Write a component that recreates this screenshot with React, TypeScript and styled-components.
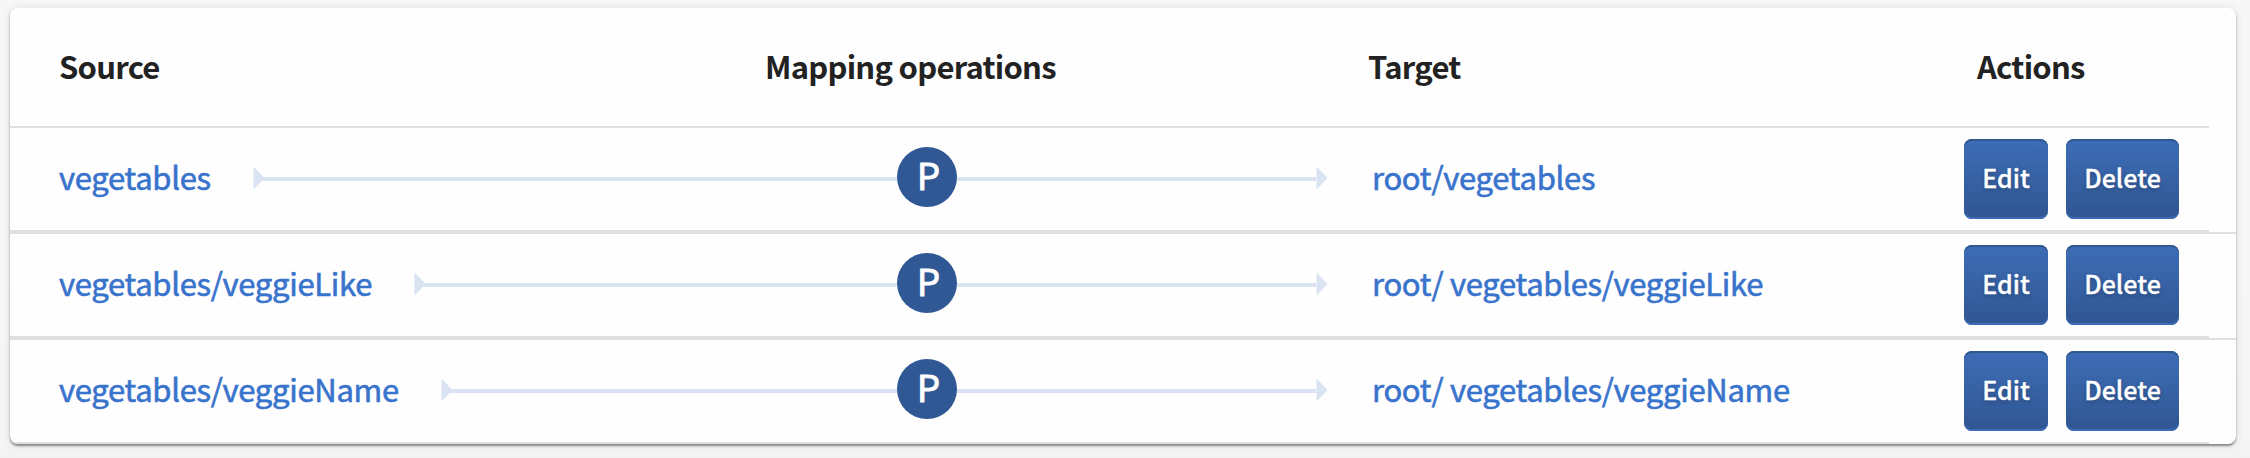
import React from 'react';
import styled, { createGlobalStyle } from 'styled-components';

const GlobalStyle = createGlobalStyle`
  * { box-sizing: border-box; }
  html { background: #f6f6f6; }
  body {
    margin: 0;
    height: 458px;
    overflow: hidden;
    background: linear-gradient(#f7f7f7, #f6f6f6 430px, #f3f3f3);
    font-family: 'Noto Sans CJK SC', 'Noto Sans', sans-serif;
    color: #222;
  }
`;

const Page = styled.main`
  padding: 8px 14px 14px 10px;
`;

const Card = styled.section`
  height: 436px;
  border-radius: 8px;
  background: #fefefe;
  overflow: hidden;
  box-shadow: 0 2px 2px rgba(0, 0, 0, 0.4), 0 1px 8px rgba(0, 0, 0, 0.12);
`;

const columns = '1323px 581px 1fr';

const HeaderRow = styled.div`
  display: grid;
  grid-template-columns: 717px 606px 581px 1fr;
  align-items: center;
  width: 2199px;
  height: 120px;
  border-bottom: 2px solid #dfdfdf;
`;

const HeaderCell = styled.div<{ $inset: number }>`
  padding-left: ${(p) => p.$inset}px;
  padding-bottom: 3px;
  font-size: 31px;
  font-weight: 700;
  line-height: 44px;
  white-space: nowrap;
  letter-spacing: -0.75px;
`;

const Row = styled.div`
  height: 106px;
  border-bottom: 2px solid #dfdfdf;
  &:last-child {
    height: 104px;
    border-bottom: 0;
  }
`;

const RowCells = styled.div`
  display: grid;
  grid-template-columns: ${columns};
  align-items: center;
  width: 2199px;
  height: 104px;
  border-bottom: 2px solid #dfdfdf;
`;

const MappingCell = styled.div`
  position: relative;
  display: flex;
  align-items: center;
  height: 100%;
  padding: 0 5px 0 49px;
`;

const PathLink = styled.a`
  display: block;
  flex: none;
  padding-bottom: 4px;
  color: #3873cc;
  font-size: 31px;
  line-height: 44px;
  white-space: nowrap;
  letter-spacing: -0.3px;
  -webkit-text-stroke: 0.6px #3873cc;
`;

const Connector = styled.div`
  display: flex;
  flex: 1;
  align-items: center;
  margin-left: 42px;
`;

const ArrowHead = styled.svg`
  flex: none;
  width: 12px;
  height: 24px;
  margin-bottom: 2px;
  fill: #d9e3f2;
`;

const ArrowLine = styled.div`
  flex: 1;
  height: 4px;
  margin-left: -3px;
  background: #d9e3f2;
`;

const OperationBadge = styled.span`
  position: absolute;
  top: 19px;
  left: 887px;
  width: 60px;
  height: 60px;
  padding-left: 3px;
  border-radius: 50%;
  background: #305894;
  color: #fff;
  font-size: 37px;
  line-height: 55px;
  text-align: center;
  -webkit-text-stroke: 0.8px #fff;
`;

const TargetCell = styled.div`
  padding-left: 39px;
`;

const ActionsCell = styled.div`
  display: flex;
  gap: 18px;
  padding-left: 50px;
`;

const ActionButton = styled.button<{ $width: number }>`
  width: ${(p) => p.$width}px;
  height: 80px;
  padding: 0 0 4px;
  border: 0;
  border-radius: 8px;
  background: linear-gradient(#3d6db7, #305692);
  box-shadow: inset 0 2px #30588f, inset 0 -2px #3c6cb5;
  color: #fff;
  font-family: inherit;
  font-size: 25px;
  font-weight: 500;
  line-height: 36px;
  -webkit-text-stroke: 0.3px #fff;
  text-shadow: 0 2px 4px rgba(0, 0, 0, 0.25);
`;

const mappings = [
  { source: 'vegetables', target: 'root/vegetables' },
  { source: 'vegetables/veggieLike', target: 'root/ vegetables/veggieLike' },
  { source: 'vegetables/veggieName', target: 'root/ vegetables/veggieName' },
];

const Arrow = () => (
  <ArrowHead viewBox="0 0 12 24">
    <path d="M0.5 0.5L11.5 12L0.5 23.5Z" />
  </ArrowHead>
);

export default function App() {
  return (
    <>
      <GlobalStyle />
      <Page>
        <Card>
          <HeaderRow>
            <HeaderCell $inset={49}>Source</HeaderCell>
            <HeaderCell $inset={38}>Mapping operations</HeaderCell>
            <HeaderCell $inset={35}>Target</HeaderCell>
            <HeaderCell $inset={63}>Actions</HeaderCell>
          </HeaderRow>
          {mappings.map((m) => (
            <Row key={m.source}>
              <RowCells>
                <MappingCell>
                  <PathLink>{m.source}</PathLink>
                  <Connector>
                    <Arrow />
                    <ArrowLine />
                    <Arrow />
                  </Connector>
                  <OperationBadge>P</OperationBadge>
                </MappingCell>
                <TargetCell>
                  <PathLink>{m.target}</PathLink>
                </TargetCell>
                <ActionsCell>
                  <ActionButton $width={84}>Edit</ActionButton>
                  <ActionButton $width={113}>Delete</ActionButton>
                </ActionsCell>
              </RowCells>
            </Row>
          ))}
        </Card>
      </Page>
    </>
  );
}
